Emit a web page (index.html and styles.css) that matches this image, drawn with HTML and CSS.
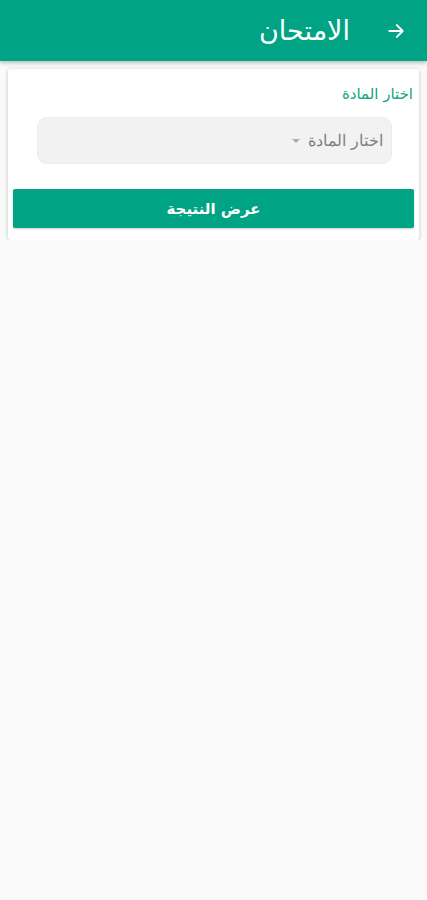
FILE: index.html
```html
<!DOCTYPE html>
<html lang="ar" dir="rtl">
<head>
<meta charset="utf-8">
<link rel="stylesheet" href="styles.css">
</head>
<body>
<header class="appbar">
  <span class="back">
    <svg width="20" height="20" viewBox="0 0 24 24"><path d="M4 12h15M13 5l7 7-7 7" fill="none" stroke="#fff" stroke-width="2.4" stroke-linecap="round" stroke-linejoin="round"/></svg>
  </span>
  <h1 class="title">الامتحان</h1>
</header>
<main class="card">
  <div class="label">اختار المادة</div>
  <div class="select">
    <span class="select-text">اختار المادة</span>
    <span class="caret"></span>
  </div>
  <button class="btn">عرض النتيجة</button>
</main>
</body>
</html>
```
FILE: styles.css
```css
html, body {
  margin: 0;
  padding: 0;
  background: #fafafa;
  font-family: "DejaVu Sans", sans-serif;
}
.appbar {
  height: 61px;
  background: #00a383;
  display: flex;
  flex-direction: row;
  align-items: center;
  padding: 0 21px 0 0;
  box-shadow: 0 2px 4px rgba(0,0,0,0.25);
  gap: 36px;
}
.back {
  display: flex;
  width: 20px;
  height: 20px;
}
.title {
  margin: 0;
  color: #fff;
  font-weight: normal;
  font-size: 27px;
  line-height: 1;
}
.card {
  margin: 8px 8px 0 8px;
  background: #fff;
  border-radius: 3px;
  box-shadow: 0 1px 4px rgba(0,0,0,0.22);
  padding: 15px 5px 12px 5px;
  display: flex;
  flex-direction: column;
}
.label {
  color: #13a386;
  font-size: 15px;
  line-height: 20px;
  padding-right: 1px;
}
.select {
  margin: 13px 22px 0 24px;
  height: 47px;
  background: #f2f2f2;
  border: 1px solid #ebebeb;
  border-radius: 10px;
  box-sizing: border-box;
  display: flex;
  align-items: center;
  padding-right: 8px;
  gap: 8px;
}
.select-text {
  color: #808080;
  font-size: 16px;
  font-weight: 300;
}
.caret {
  width: 0;
  height: 0;
  border-left: 4px solid transparent;
  border-right: 4px solid transparent;
  border-top: 4px solid #aaa;
}
.btn {
  margin-top: 25px;
  height: 39px;
  border: none;
  border-radius: 2px;
  background: #00a383;
  color: #fff;
  font-family: "DejaVu Sans", sans-serif;
  font-weight: bold;
  font-size: 15px;
  box-shadow: 0 1px 2px rgba(0,0,0,0.2);
}
```
